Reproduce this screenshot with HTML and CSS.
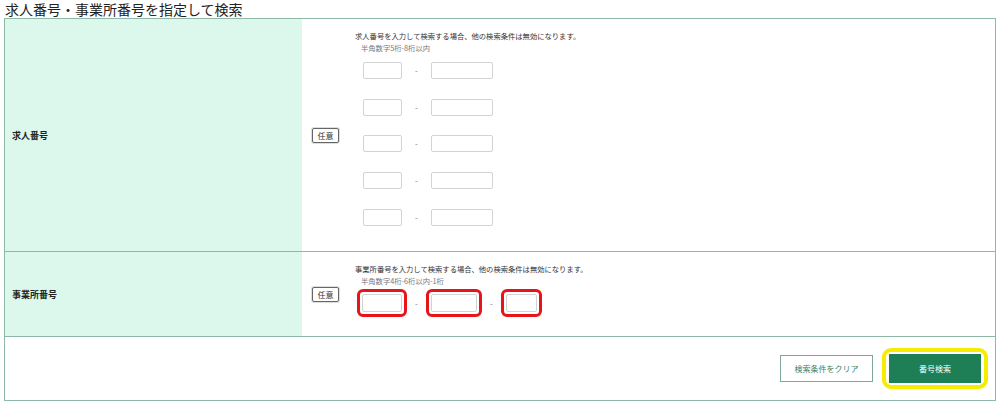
FILE: index.html
```html
<!DOCTYPE html>
<html lang="ja">
<head>
<meta charset="utf-8">
<title>求人番号・事業所番号を指定して検索</title>
<link rel="stylesheet" href="styles.css">
</head>
<body>
<h2 class="title">求人番号・事業所番号を指定して検索</h2>
<div class="form">
  <div class="row row-job">
    <div class="head">求人番号</div>
    <div class="cell">
      <span class="badge">任意</span>
      <div class="body">
        <p class="note">求人番号を入力して検索する場合、他の検索条件は無効になります。</p>
        <p class="sub">半角数字5桁-8桁以内</p>
        <div class="inputs">
          <div class="pair"><span class="inp w39"></span><span class="dash">-</span><span class="inp w62"></span></div>
          <div class="pair"><span class="inp w39"></span><span class="dash">-</span><span class="inp w62"></span></div>
          <div class="pair"><span class="inp w39"></span><span class="dash">-</span><span class="inp w62"></span></div>
          <div class="pair"><span class="inp w39"></span><span class="dash">-</span><span class="inp w62"></span></div>
          <div class="pair"><span class="inp w39"></span><span class="dash">-</span><span class="inp w62"></span></div>
        </div>
      </div>
    </div>
  </div>
  <div class="row row-office">
    <div class="head">事業所番号</div>
    <div class="cell">
      <span class="badge">任意</span>
      <div class="body">
        <p class="note">事業所番号を入力して検索する場合、他の検索条件は無効になります。</p>
        <p class="sub">半角数字4桁-6桁以内-1桁</p>
        <div class="office-inputs">
          <span class="mark"><span class="inp tall w40"></span></span>
          <span class="dash2">-</span>
          <span class="mark"><span class="inp tall w46"></span></span>
          <span class="dash2">-</span>
          <span class="mark"><span class="inp tall w31"></span></span>
        </div>
      </div>
    </div>
  </div>
  <div class="actions">
    <button class="btn-clear" type="button">検索条件をクリア</button>
    <span class="ring"><button class="btn-search" type="button">番号検索</button></span>
  </div>
</div>
</body>
</html>
```
FILE: styles.css
```css
* { box-sizing: border-box; }
body {
  margin: 0;
  background: #fff;
  font-family: "Noto Sans CJK JP", "Noto Sans", sans-serif;
  color: #222;
}
.title {
  margin: 0;
  padding-left: 5px;
  font-size: 14px;
  line-height: 18px;
  font-weight: 400;
  color: #222;
}
.form {
  margin-left: 4px;
  width: 992px;
  border: 1px solid #8fb9a7;
}
.row {
  display: grid;
  grid-template-columns: 297px 1fr;
  border-bottom: 1px solid #8fb9a7;
}
.row-job { height: 233px; }
.row-office { height: 85px; }
.head {
  background: #dcf8ec;
  display: flex;
  align-items: center;
  padding-left: 7px;
  font-size: 9px;
  font-weight: 700;
  color: #222;
}
.cell {
  display: flex;
  align-items: center;
  padding-left: 10px;
}
.badge {
  flex: none;
  width: 27px;
  height: 15px;
  border: 1px solid #666;
  border-radius: 2px;
  font-size: 8px;
  line-height: 13px;
  text-align: center;
  color: #333;
  background: #fff;
  box-shadow: 0 0 0 1px #ddd;
  margin-right: 16px;
}
.body {
  align-self: flex-start;
  padding-top: 12px;
}
.note {
  margin: 0;
  font-size: 7.3px;
  line-height: 11px;
  color: #333;
}
.sub {
  margin: 1px 0 0 6px;
  font-size: 7.3px;
  line-height: 10px;
  color: #777;
}
.inputs {
  margin-top: 9px;
  margin-left: 8px;
  display: flex;
  flex-direction: column;
  gap: 19.7px;
}
.pair {
  display: flex;
  align-items: center;
}
.inp {
  display: block;
  height: 17px;
  border: 1px solid #d3d3d3;
  border-radius: 2px;
  background: #fff;
}
.inp.tall { height: 18px; }
.w39 { width: 39px; }
.w40 { width: 40px; }
.w62 { width: 62px; }
.w46 { width: 46px; }
.w31 { width: 31px; }
.dash {
  width: 29px;
  text-align: center;
  font-size: 8px;
  color: #777;
}
.office-inputs {
  margin-top: 3px;
  margin-left: 2px;
  display: flex;
  align-items: center;
}
.mark {
  display: block;
  border: 3px solid #e8141c;
  border-radius: 6px;
  padding: 2px;
}
.dash2 {
  width: 19px;
  text-align: center;
  font-size: 8px;
  color: #777;
}
.actions {
  height: 63px;
  display: flex;
  align-items: center;
  justify-content: flex-end;
  padding-right: 7px;
}
.btn-clear {
  width: 93px;
  height: 27px;
  border: 1px solid #7fa997;
  background: #fff;
  color: #3f7d61;
  font-family: inherit;
  font-size: 8px;
  margin-right: 9px;
  padding: 0;
}
.ring {
  display: block;
  border: 4px solid #f6ec00;
  border-radius: 9px;
  padding: 2px 3px;
}
.btn-search {
  display: block;
  width: 92px;
  height: 29px;
  border: 0;
  background: #1e7e55;
  color: #fff;
  font-family: inherit;
  font-size: 8px;
  padding: 0;
}
```
